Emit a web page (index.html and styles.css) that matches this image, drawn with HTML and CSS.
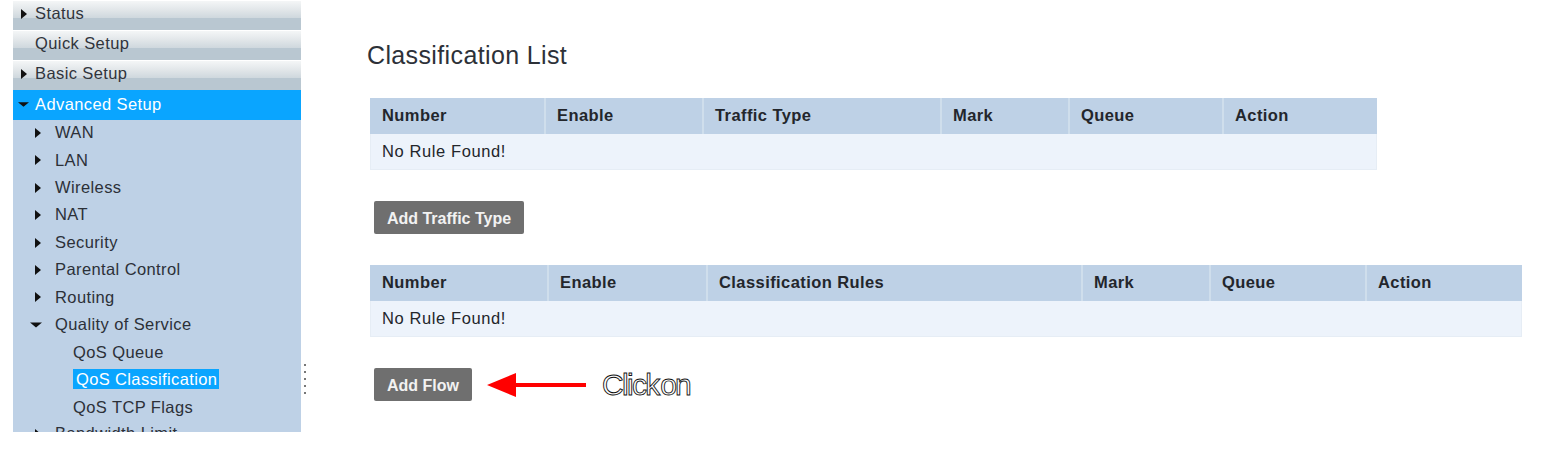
FILE: index.html
```html
<!DOCTYPE html>
<html lang="en">
<head>
<meta charset="utf-8">
<title>Classification List</title>
<link rel="stylesheet" href="styles.css">
</head>
<body>
<div class="page">
  <nav class="sidebar">
    <div class="top"><svg class="tri" viewBox="0 0 8 10"><path d="M1 0l6 5-6 5z"/></svg>Status</div>
    <div class="top">Quick Setup</div>
    <div class="top"><svg class="tri" viewBox="0 0 8 10"><path d="M1 0l6 5-6 5z"/></svg>Basic Setup</div>
    <div class="top active"><svg class="tri" viewBox="0 0 10 8"><path d="M0 2h10L5 6z"/></svg>Advanced Setup</div>
    <div class="sub"><svg class="tri" viewBox="0 0 8 10"><path d="M1 0l6 5-6 5z"/></svg>WAN</div>
    <div class="sub"><svg class="tri" viewBox="0 0 8 10"><path d="M1 0l6 5-6 5z"/></svg>LAN</div>
    <div class="sub"><svg class="tri" viewBox="0 0 8 10"><path d="M1 0l6 5-6 5z"/></svg>Wireless</div>
    <div class="sub"><svg class="tri" viewBox="0 0 8 10"><path d="M1 0l6 5-6 5z"/></svg>NAT</div>
    <div class="sub"><svg class="tri" viewBox="0 0 8 10"><path d="M1 0l6 5-6 5z"/></svg>Security</div>
    <div class="sub"><svg class="tri" viewBox="0 0 8 10"><path d="M1 0l6 5-6 5z"/></svg>Parental Control</div>
    <div class="sub"><svg class="tri" viewBox="0 0 8 10"><path d="M1 0l6 5-6 5z"/></svg>Routing</div>
    <div class="sub"><svg class="tri wide" viewBox="0 0 10 8"><path d="M0 2h10L5 6z"/></svg>Quality of Service</div>
    <div class="leaf"><span>QoS Queue</span></div>
    <div class="leaf current"><span>QoS Classification</span></div>
    <div class="leaf"><span>QoS TCP Flags</span></div>
    <div class="sub"><svg class="tri" viewBox="0 0 8 10"><path d="M1 0l6 5-6 5z"/></svg>Bandwidth Limit</div>
  </nav>
  <div class="dots"><i></i><i></i><i></i><i></i><i></i></div>
  <main class="content">
    <h1>Classification List</h1>
    <div class="table t1">
      <div class="cell">Number</div><div class="cell">Enable</div><div class="cell">Traffic Type</div><div class="cell">Mark</div><div class="cell">Queue</div><div class="cell">Action</div>
      <div class="empty">No Rule Found!</div>
    </div>
    <button class="btn b1">Add Traffic Type</button>
    <div class="table t2">
      <div class="cell">Number</div><div class="cell">Enable</div><div class="cell">Classification Rules</div><div class="cell">Mark</div><div class="cell">Queue</div><div class="cell">Action</div>
      <div class="empty">No Rule Found!</div>
    </div>
    <div class="action">
      <button class="btn b2">Add Flow</button>
      <svg class="arrow" viewBox="0 0 100 26"><path d="M0 13L29 1v10h70v4H29v10z"/></svg>
      <span class="click">Click on</span>
    </div>
  </main>
</div>
</body>
</html>
```
FILE: styles.css
```css
* { box-sizing: border-box; }
html, body { margin: 0; background: #fff; }
body { font-family: "Liberation Sans", Arial, sans-serif; color: #2a2d35; overflow: hidden; }
.page { display: flex; height: 454px; }
.sidebar { width: 288px; height: 432px; margin-left: 13px; background: #bed1e6; overflow: hidden; font-size: 16.5px; letter-spacing: 0.4px; flex: none; }
.tri { width: 8px; height: 10px; fill: #111; flex: none; }
.top { height: 30px; display: flex; align-items: center; padding: 0 0 4px 22px; position: relative; color: #30343c;
  background: linear-gradient(#f4f6f7 0, #dfe4e7 35%, #cfd8de 58%, #b9c7d1 60%, #b9c7d1 100%); border-top: 1px solid #fff; }
.top .tri { position: absolute; left: 7px; top: 8px; }
.top.active { background: #0aa5ff; color: #fff; border-top: 0; padding-bottom: 2px; }
.top.active .tri { width: 11px; height: 9px; left: 5px; top: 10px; }
.sub { height: 27.4px; display: flex; align-items: center; padding-left: 42px; position: relative; color: #2c3038; }
.sub .tri { position: absolute; left: 21px; top: 9px; }
.sub .tri.wide { width: 12px; height: 10px; left: 17px; }
.leaf { height: 27.4px; display: flex; align-items: center; padding-left: 60px; color: #2c3038; }
.leaf span { line-height: 20px; }
.current span { background: #0aa5ff; color: #fff; padding: 0 2px 0 3px; letter-spacing: 0.36px; }
.sub:nth-child(5) { margin-top: -1px; }
.dots { width: 6px; margin: 364px 0 0 1px; display: flex; flex-direction: column; gap: 5px; flex: none; }
.dots i { width: 2px; height: 2px; background: #777; margin-left: 2px; }
.content { flex: 1; padding: 41px 0 0 59px; min-width: 0; }
h1 { margin: 0 0 28px; font-weight: 400; font-size: 25px; letter-spacing: 0.37px; line-height: 29px; color: #2d3138; }
.table { display: grid; margin-left: 3px; font-size: 16.5px; letter-spacing: 0.6px; }
.t1 { width: 1007px; grid-template-columns: 176px 158px 238px 128px 154px 153px; }
.t2 { width: 1152px; grid-template-columns: 179px 159px 375px 128px 156px 155px; }
.cell { height: 36px; background: #bed1e6; font-weight: 700; letter-spacing: 0.42px; display: flex; align-items: center; padding: 0 0 2px 12px; border-right: 2px solid #cfdeec; color: #23262c; }
.cell + .cell { padding-left: 11px; }
.cell:nth-child(6) { border-right: 0; }
.empty { grid-column: 1 / -1; height: 36px; background: #edf3fb; border: 1px solid #e6edf5; border-top: 0; display: flex; align-items: center; padding: 0 0 0 11px; color: #23262c; }
.btn { display: block; border: 0; background: #6f6f6f; color: #f2f2f2; font: 700 16px "Liberation Sans", Arial, sans-serif; height: 33px; border-radius: 2px; padding: 2px 0 0; margin-left: 7px; }
.b1 { width: 150px; margin-top: 31px; margin-bottom: 31px; }
.b2 { width: 98px; margin: 0; }
.action { display: flex; align-items: center; margin: 31px 0 0 7px; height: 33px; }
.arrow { width: 100px; height: 26px; fill: #f00; margin-left: 15px; flex: none; }
.click { margin-left: 15px; font-size: 30px; letter-spacing: -1.7px; word-spacing: -5px; color: #fff; -webkit-text-stroke: 0.9px #111; opacity: 0.99; white-space: nowrap; }
```
